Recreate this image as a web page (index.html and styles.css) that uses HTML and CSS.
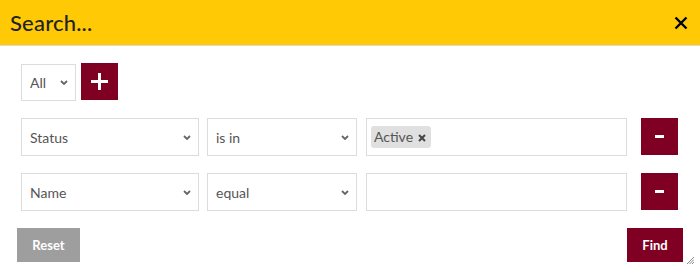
FILE: index.html
```html
<!DOCTYPE html>
<html lang="en">
<head>
    <meta charset="UTF-8">
    <meta name="viewport" content="width=device-width, initial-scale=1.0">
    <title>Search</title>
    <link rel="stylesheet" href="styles.css">
</head>
<body>
    <div class="dialog">
        <div class="dialog-header">
            <h2>Search...</h2>
            <button class="close-btn" aria-label="Close">
                <svg width="14" height="14" viewBox="0 0 14 14"><path d="M1.5 1.5 L12.5 12.5 M12.5 1.5 L1.5 12.5" stroke="#000" stroke-width="2.4"/></svg>
            </button>
        </div>
        <div class="dialog-body">
            <div class="row group-row">
                <select class="field sel-group">
                    <option>All</option>
                    <option>Any</option>
                </select>
                <button class="icon-btn add-btn" aria-label="Add">
                    <svg width="17" height="17" viewBox="0 0 17 17"><path d="M8.5 0 V17 M0 8.5 H17" stroke="#fff" stroke-width="3"/></svg>
                </button>
            </div>

            <div class="row rule-row">
                <select class="field sel-field">
                    <option>Status</option>
                </select>
                <select class="field sel-op">
                    <option>is in</option>
                </select>
                <div class="field value-box">
                    <span class="tag">Active <svg class="tag-x" width="8" height="8" viewBox="0 0 8 8"><path d="M1 1 L7 7 M7 1 L1 7" stroke="#444" stroke-width="2"/></svg></span>
                </div>
                <button class="icon-btn remove-btn" aria-label="Remove">
                    <svg width="9" height="3" viewBox="0 0 9 3"><rect width="9" height="3" fill="#fff"/></svg>
                </button>
            </div>

            <div class="row rule-row">
                <select class="field sel-field">
                    <option>Name</option>
                </select>
                <select class="field sel-op">
                    <option>equal</option>
                </select>
                <input class="field value-box" type="text">
                <button class="icon-btn remove-btn" aria-label="Remove">
                    <svg width="9" height="3" viewBox="0 0 9 3"><rect width="9" height="3" fill="#fff"/></svg>
                </button>
            </div>

            <div class="footer">
                <button class="btn btn-reset">Reset</button>
                <button class="btn btn-find">Find</button>
            </div>
        </div>
        <svg class="resize" width="7" height="7" viewBox="0 0 7 7"><path d="M7 0 L0 7 M7 2.5 L2.5 7 M7 5 L5 7" stroke="#888" stroke-width="1"/></svg>
    </div>
</body>
</html>
```

FILE: styles.css
```css
body {
    margin: 0;
    font-family: Lato, "Open Sans", sans-serif;
    background-color: #fff;
}
.dialog {
    position: relative;
    width: 700px;
    height: 273px;
    box-sizing: border-box;
}
.dialog-header {
    height: 45px;
    background-color: #ffca05;
    border-bottom: 1px solid #d9d9d9;
    display: flex;
    align-items: center;
    justify-content: space-between;
    padding: 0 12px 0 10px;
}
.dialog-header h2 {
    margin: 0;
    font-size: 22px;
    font-weight: 500;
    color: #222;
    letter-spacing: 0.2px;
}
.close-btn {
    background: none;
    border: none;
    padding: 0;
    display: flex;
    margin-top: 1px;
    cursor: pointer;
}
.dialog-body {
    padding: 16px 17px 0 17px;
}
.row {
    display: flex;
    align-items: center;
}
.group-row {
    padding-left: 4px;
    margin-bottom: 17px;
}
.rule-row {
    padding-left: 4px;
    margin-bottom: 17px;
}
.field {
    box-sizing: border-box;
    height: 38px;
    border: 1px solid #dcdcdc;
    background-color: #fff;
    font-family: Lato, "Open Sans", sans-serif;
    font-size: 14px;
    color: #555;
    border-radius: 0;
    outline: none;
}
select.field {
    -webkit-appearance: none;
    appearance: none;
    padding: 0 20px 0 8px;
    background-image: url("data:image/svg+xml;utf8,<svg xmlns='http://www.w3.org/2000/svg' width='8' height='5' viewBox='0 0 8 5'><path d='M1 1 L4 4 L7 1' fill='none' stroke='%23666' stroke-width='1.8'/></svg>");
    background-repeat: no-repeat;
    background-position: right 7px center;
}
.sel-group {
    width: 55px;
    height: 37px;
    margin-top: 2px;
}
.sel-field {
    width: 178px;
}
.sel-op {
    width: 150px;
    margin-left: 8px;
}
.value-box {
    width: 261px;
    margin-left: 9px;
    display: flex;
    align-items: center;
    padding: 0 4px;
}
.tag {
    background-color: #e0e0e0;
    border-radius: 3px;
    height: 22px;
    line-height: 22px;
    padding: 0 5px 0 3px;
    font-size: 14px;
    color: #555;
}
.tag-x {
    margin-left: 1px;
    vertical-align: 0;
}
.icon-btn {
    width: 37px;
    height: 37px;
    border: none;
    padding: 0;
    background-color: #800024;
    display: flex;
    align-items: center;
    justify-content: center;
    cursor: pointer;
}
.add-btn {
    margin-left: 5px;
}
.remove-btn {
    margin-left: 14px;
    margin-top: -2px;
}
.footer {
    display: flex;
    justify-content: space-between;
    margin-top: 2px;
}
.btn {
    height: 34px;
    border: none;
    color: #fff;
    font-family: Lato, "Open Sans", sans-serif;
    font-size: 13px;
    font-weight: bold;
    cursor: pointer;
}
.btn-reset {
    width: 63px;
    background-color: #9e9e9e;
}
.btn-find {
    width: 56px;
    background-color: #800024;
}
.resize {
    position: absolute;
    right: 6px;
    bottom: 9px;
}
```
